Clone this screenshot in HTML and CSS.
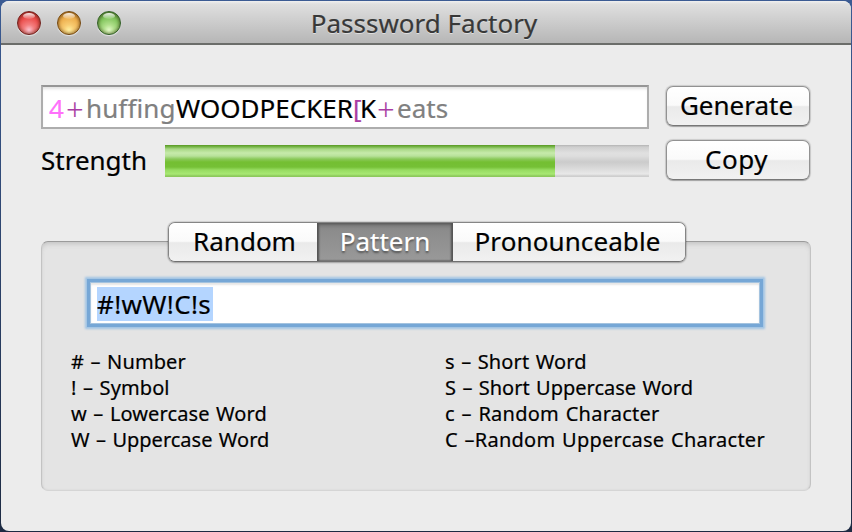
FILE: index.html
```html
<!DOCTYPE html>
<html lang="en">
<head>
<meta charset="utf-8">
<title>Passsword Factory</title>
<link rel="stylesheet" href="styles.css">
</head>
<body>
<div class="window">
  <header class="titlebar">
    <div class="lights">
      <span class="light red"></span>
      <span class="light yellow"></span>
      <span class="light green"></span>
    </div>
    <h1 class="title">Passsword Factory</h1>
  </header>
  <main class="content">
    <section class="top">
      <div class="password"><span class="digit">4</span><span class="symbol plus">+</span><span class="lower">huffing</span><span class="upper">WOODPECKER</span><span class="symbol bracket">[</span><span class="key">K</span><span class="symbol plus second">+</span><span class="tail">eats</span></div>
      <button class="button">Generate</button>
      <div class="strength">
        <span class="label">Strength</span>
        <div class="meter"><div class="fill"></div></div>
      </div>
      <button class="button copy">Copy</button>
    </section>
    <section class="panel">
      <nav class="tabs">
        <button class="tab random">Random</button>
        <button class="tab selected">Pattern</button>
        <button class="tab pronounceable">Pronounceable</button>
      </nav>
      <div class="pattern"><span class="selection">#!wW!C!s</span></div>
      <div class="legend">
        <ul class="column">
          <li># – Number</li>
          <li>! – Symbol</li>
          <li>w – Lowercase Word</li>
          <li class="narrow">W – Uppercase Word</li>
        </ul>
        <ul class="column">
          <li>s – Short Word</li>
          <li class="narrow">S – Short Uppercase Word</li>
          <li class="wide">c – Random Character</li>
          <li class="wide">C –Random Uppercase Character</li>
        </ul>
      </div>
    </section>
  </main>
</div>
</body>
</html>
```
FILE: styles.css
```css
* { box-sizing: border-box; }

body {
  margin: 0;
  width: 852px;
  height: 532px;
  overflow: hidden;
  background: linear-gradient(#3b5b93, #1d2a42);
  font: 26px/40px "Noto Sans", "Open Sans", sans-serif;
  color: #000;
  -webkit-text-stroke: 0.2px;
}

.window {
  width: 850px;
  height: 530px;
  margin: 1px;
  border-radius: 8px;
  overflow: hidden;
  background: #ececec;
}

.titlebar {
  display: grid;
  height: 44px;
  background: linear-gradient(#f0f0f0 0, #dfdfdf 3px, #b6b6b6 42px);
  border-bottom: 2px solid #6b6d6a;
}

.titlebar > * { grid-area: 1 / 1; }

.lights {
  display: flex;
  gap: 16px;
  padding: 10px 0 0 16px;
}

.light {
  position: relative;
  width: 24px;
  height: 24px;
  border-radius: 50%;
  border: 1px solid;
  box-shadow: 0 1px 1px rgba(255, 255, 255, .6), inset 0 0 3px 1px rgba(40, 20, 0, .4);
}

.light::before {
  content: "";
  position: absolute;
  left: 5px;
  top: 1px;
  width: 12px;
  height: 6px;
  border-radius: 50%;
  background: linear-gradient(rgba(255, 255, 255, .9), rgba(255, 255, 255, .1));
}

.red { border-color: #72201c; background: radial-gradient(circle at 50% 82%, #fbc3d0 0, #f47f80 25%, #eb4b49 60%, #c02c2a 100%); }
.yellow { border-color: #75480f; background: radial-gradient(circle at 50% 82%, #fff0a0 0, #f8cc72 25%, #edae4c 60%, #b97622 100%); }
.green { border-color: #315f25; background: radial-gradient(circle at 50% 82%, #e3fac8 0, #b1e08c 25%, #80c45b 60%, #4e8b36 100%); }

.title {
  margin: 0;
  padding: 2px 4px 0 0;
  text-align: center;
  font-size: 26px;
  line-height: 40px;
  font-weight: 400;
  color: #383838;
  text-shadow: 0 1px 0 rgba(255, 255, 255, .5);
}

.content { padding: 40px; }

.top {
  display: grid;
  grid-template-columns: 608px 144px;
  grid-template-rows: 44px 40px;
  gap: 11px 17px;
}

.password {
  display: flex;
  padding-left: 6px;
  line-height: 42px;
  border: 2px solid #adadad;
  border-top-color: #969696;
  background: #fff;
  box-shadow: inset 0 3px 3px -1px #e2e2e2;
}

.digit { width: 17px; color: #ff70fb; }
.symbol { color: #a93da4; }
.plus {
  width: 20px;
  font-size: 31px;
  font-weight: 300;
  line-height: 44px;
  -webkit-text-stroke: 0;
}
.lower { width: 90px; color: #808080; letter-spacing: .1px; }
.upper { width: 177px; }
.bracket { width: 7px; }
.key { width: 17px; }
.second { width: 20px; }
.tail { color: #808080; }

.button {
  height: 40px;
  margin: 1px 0 0;
  padding: 0 3px 0 0;
  border: 1px solid #929292;
  border-bottom-color: #777;
  border-radius: 7px;
  background: linear-gradient(#fff 0, #fafafa 48%, #eaeaea 52%, #f1f1f1 100%);
  box-shadow: 0 0 1px 1px rgba(0, 0, 0, .14), 0 1px 1px rgba(0, 0, 0, .2);
  font: inherit;
  line-height: 36px;
  padding-bottom: 2px;
  color: inherit;
  -webkit-text-stroke: inherit;
}

.copy { margin-top: 0; letter-spacing: .5px; }

.strength {
  display: flex;
  align-items: center;
  height: 42px;
}

.label { width: 124px; padding-bottom: 2px; }

.meter {
  flex: 1;
  height: 32px;
  background: linear-gradient(#b3b3b3 0, #cecece 2px, #e0e0e0 8px, #dedede 11px, #cbcbcb 17px, #d9d9d9 23px, #e8e8e8 29px, #cecece 31px);
}

.fill {
  width: 390px;
  height: 32px;
  background: linear-gradient(#579721 0, #7ab94c 2px, #a8d785 4px, #c6eaaa 8px, #b8e29a 11px, #8bc95b 14px, #74bf32 17px, #75c036 22px, #97dc61 25px, #a8e873 29px, #8dc95c 31px);
}

.panel {
  display: flex;
  flex-direction: column;
  height: 250px;
  margin-top: 61px;
  border: 1px solid #c3c3c3;
  border-top-color: #9b9b9b;
  border-bottom-color: #d5d5d5;
  border-radius: 7px;
  background: #e4e4e4;
  box-shadow: inset 0 4px 5px -2px #c5c5c5, inset 0 0 2px #d0d0d0;
}

.tabs {
  display: flex;
  width: 518px;
  height: 40px;
  margin: -20px 0 0 126px;
  border: 1px solid #858585;
  border-bottom-color: #707070;
  border-radius: 7px;
  box-shadow: 0 0 1px 1px rgba(0, 0, 0, .12), 0 1px 2px rgba(0, 0, 0, .2);
  overflow: hidden;
}

.tab {
  flex: none;
  border: 0;
  padding: 0 0 2px;
  background: linear-gradient(#fff 0, #fafafa 48%, #eaeaea 52%, #f1f1f1 100%);
  font: inherit;
  line-height: 36px;
  color: inherit;
  -webkit-text-stroke: inherit;
}

.random { width: 148px; padding-left: 3px; }

.selected {
  width: 136px;
  background: linear-gradient(#7e7e7e, #8c8c8c 20%, #999);
  color: #fff;
  box-shadow: inset 2px 0 2px #555, inset -2px 0 2px #555, inset 0 2px 3px #666;
  text-shadow: 0 2px 2px #555;
}

.pronounceable { width: 232px; padding-right: 3px; letter-spacing: .1px; }

.pattern {
  width: 670px;
  height: 42px;
  margin: 20px 0 0 48px;
  padding: 4px 0 0 6px;
  border: 1px solid #a4c3df;
  background: #fff;
  box-shadow: 0 0 0 3px #76a7d6, 0 0 2px 5px #a0c4e4, inset 0 2px 2px #e6e6e6;
}

.selection {
  display: block;
  width: 116px;
  height: 34px;
  line-height: 34px;
  letter-spacing: .35px;
  background: #b4d5ff;
}

.legend {
  display: grid;
  grid-template-columns: 374px 1fr;
  margin: 25px 0 0 29px;
  font-size: 20px;
  line-height: 26px;
  letter-spacing: .1px;
  word-spacing: 1.2px;
}

.column { margin: 0; padding: 0; list-style: none; white-space: nowrap; }
.narrow { letter-spacing: 0; }
.wide { letter-spacing: .25px; }
```
